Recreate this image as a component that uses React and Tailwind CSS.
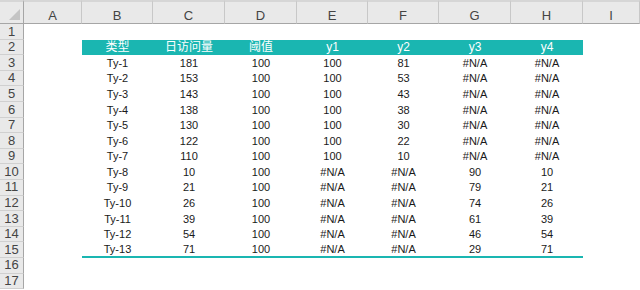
import React from 'react';

const cols = ['A', 'B', 'C', 'D', 'E', 'F', 'G', 'H', 'I'];
const heads = ['类型', '日访问量', '阈值', 'y1', 'y2', 'y3', 'y4'];

const rows = [
  ['Ty-1', '181', '100', '100', '81', '#N/A', '#N/A'],
  ['Ty-2', '153', '100', '100', '53', '#N/A', '#N/A'],
  ['Ty-3', '143', '100', '100', '43', '#N/A', '#N/A'],
  ['Ty-4', '138', '100', '100', '38', '#N/A', '#N/A'],
  ['Ty-5', '130', '100', '100', '30', '#N/A', '#N/A'],
  ['Ty-6', '122', '100', '100', '22', '#N/A', '#N/A'],
  ['Ty-7', '110', '100', '100', '10', '#N/A', '#N/A'],
  ['Ty-8', '10', '100', '#N/A', '#N/A', '90', '10'],
  ['Ty-9', '21', '100', '#N/A', '#N/A', '79', '21'],
  ['Ty-10', '26', '100', '#N/A', '#N/A', '74', '26'],
  ['Ty-11', '39', '100', '#N/A', '#N/A', '61', '39'],
  ['Ty-12', '54', '100', '#N/A', '#N/A', '46', '54'],
  ['Ty-13', '71', '100', '#N/A', '#N/A', '29', '71'],
];

const RowNum = ({ n }) => (
  <div className="flex items-center justify-center bg-[#e9e9e9] border-r border-r-[#a6a6a6] border-b border-b-[#d0d0d0] text-[13px] text-[#444]">
    {n}
  </div>
);

const Blank = () => <div />;

export default function App() {
  return (
    <div
      className="w-[640px] h-[290px] overflow-hidden bg-white grid grid-cols-[24px_58px_71px_72px_72px_71px_71px_72px_72px_1fr] grid-rows-[24px_repeat(17,15.6px)]"
      style={{ fontFamily: '"Liberation Sans", Arial, "Noto Sans CJK SC", sans-serif' }}
    >
      {/* corner */}
      <div className="relative bg-[#e9e9e9] border-r border-r-[#a6a6a6] border-b border-b-[#a6a6a6] border-t-2 border-t-[#d6d6d6]">
        <div className="absolute right-[3px] bottom-[3px] w-0 h-0 border-l-[11px] border-l-transparent border-b-[11px] border-b-[#c4c4c4]" />
      </div>
      {cols.map((c) => (
        <div
          key={c}
          className="flex items-center justify-center bg-[#e9e9e9] border-r border-r-[#c8c8c8] border-b border-b-[#a6a6a6] border-t-2 border-t-[#d6d6d6] text-[13px] text-[#444] pt-[6px]"
        >
          {c}
        </div>
      ))}

      {/* row 1 */}
      <RowNum n={1} />
      {cols.map((c) => (
        <Blank key={c} />
      ))}

      {/* row 2 header band */}
      <RowNum n={2} />
      <Blank />
      {heads.map((h) => (
        <div key={h} className="flex items-center justify-center bg-[#1ab6b1] text-white text-[12px]">
          {h}
        </div>
      ))}
      <Blank />

      {rows.map((r, i) => (
        <React.Fragment key={r[0]}>
          <RowNum n={i + 3} />
          <Blank />
          {r.map((v, j) => (
            <div
              key={j}
              className={`flex items-center justify-center text-[11px] text-[#1a1a1a] ${
                i === rows.length - 1 ? 'border-b-2 border-b-[#1ab6b1]' : ''
              }`}
            >
              {v}
            </div>
          ))}
          <Blank />
        </React.Fragment>
      ))}

      <RowNum n={16} />
      {cols.map((c) => (
        <Blank key={c} />
      ))}
      <RowNum n={17} />
      {cols.map((c) => (
        <Blank key={c} />
      ))}
    </div>
  );
}
